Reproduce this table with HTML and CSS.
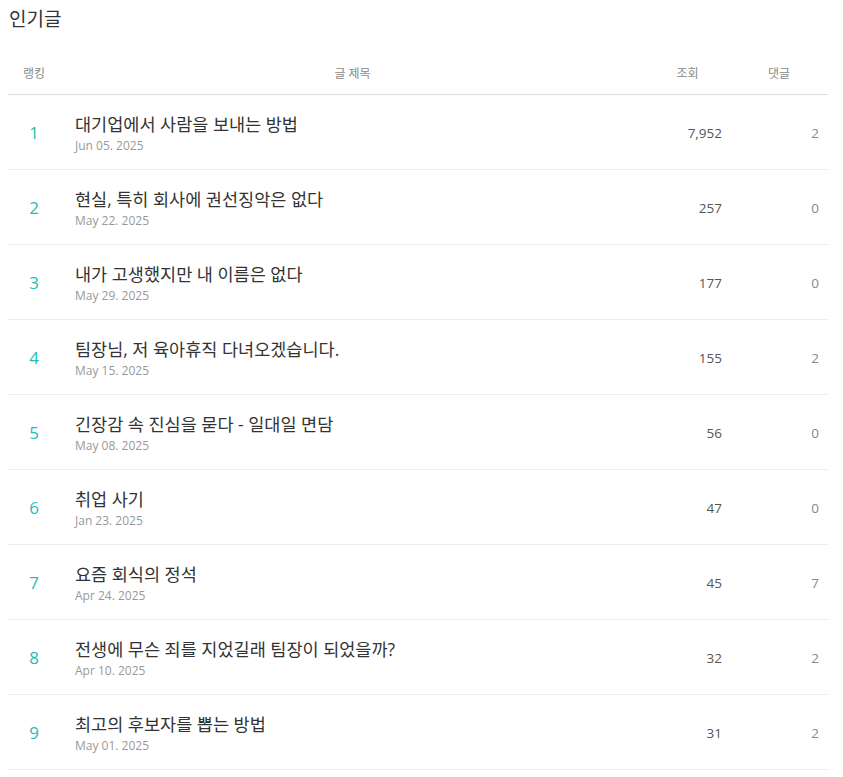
FILE: index.html
```html
<!DOCTYPE html>
<html lang="ko">
<head>
<meta charset="utf-8">
<title>인기글</title>
<link rel="stylesheet" href="styles.css">
</head>
<body>
<div class="page">
  <h1 class="page-title">인기글</h1>
  <table class="rank-table">
    <colgroup>
      <col class="c-rank"><col class="c-title"><col class="c-views"><col class="c-comments">
    </colgroup>
    <thead>
      <tr><th>랭킹</th><th>글 제목</th><th>조회</th><th>댓글</th></tr>
    </thead>
    <tbody>
      <tr><td class="rank">1</td><td class="post"><div class="post-title">대기업에서 사람을 보내는 방법</div><div class="post-date">Jun 05. 2025</div></td><td class="views">7,952</td><td class="comments">2</td></tr>
      <tr><td class="rank">2</td><td class="post"><div class="post-title">현실, 특히 회사에 권선징악은 없다</div><div class="post-date">May 22. 2025</div></td><td class="views">257</td><td class="comments">0</td></tr>
      <tr><td class="rank">3</td><td class="post"><div class="post-title">내가 고생했지만 내 이름은 없다</div><div class="post-date">May 29. 2025</div></td><td class="views">177</td><td class="comments">0</td></tr>
      <tr><td class="rank">4</td><td class="post"><div class="post-title">팀장님, 저 육아휴직 다녀오겠습니다.</div><div class="post-date">May 15. 2025</div></td><td class="views">155</td><td class="comments">2</td></tr>
      <tr><td class="rank">5</td><td class="post"><div class="post-title">긴장감 속 진심을 묻다 - 일대일 면담</div><div class="post-date">May 08. 2025</div></td><td class="views">56</td><td class="comments">0</td></tr>
      <tr><td class="rank">6</td><td class="post"><div class="post-title">취업 사기</div><div class="post-date">Jan 23. 2025</div></td><td class="views">47</td><td class="comments">0</td></tr>
      <tr><td class="rank">7</td><td class="post"><div class="post-title">요즘 회식의 정석</div><div class="post-date">Apr 24. 2025</div></td><td class="views">45</td><td class="comments">7</td></tr>
      <tr><td class="rank">8</td><td class="post"><div class="post-title">전생에 무슨 죄를 지었길래 팀장이 되었을까?</div><div class="post-date">Apr 10. 2025</div></td><td class="views">32</td><td class="comments">2</td></tr>
      <tr><td class="rank">9</td><td class="post"><div class="post-title">최고의 후보자를 뽑는 방법</div><div class="post-date">May 01. 2025</div></td><td class="views">31</td><td class="comments">2</td></tr>
    </tbody>
  </table>
</div>
</body>
</html>
```

FILE: styles.css
```css
html, body {
  margin: 0;
  padding: 0;
  background: #fff;
}
body {
  font-family: "Open Sans", "Noto Sans CJK KR", sans-serif;
  color: #333;
}
.page {
  padding: 7px 15px 0 8px;
}
.page-title {
  margin: 0 0 20px 1px;
  font-size: 19px;
  line-height: 24px;
  font-weight: 400;
  color: #333;
}
.rank-table {
  width: 820px;
  border-collapse: collapse;
  table-layout: fixed;
}
.c-rank { width: 52px; }
.c-title { width: 585px; }
.c-views { width: 85px; }
.c-comments { width: 98px; }
.rank-table th {
  height: 43px;
  padding: 0;
  font-size: 12px;
  font-weight: 400;
  color: #888;
  text-align: center;
  border-bottom: 1px solid #dcdcdc;
  vertical-align: middle;
}
.rank-table tbody tr {
  height: 75px;
}
.rank-table td {
  height: 72px;
  padding: 2px 0 0 0;
  border-bottom: 1px solid #ececec;
  vertical-align: middle;
  overflow: hidden;
}
.rank {
  text-align: center;
  font-size: 17px;
  line-height: 22px;
  color: #27bcae;
}
.rank-table td.post {
  padding: 3px 0 0 15px;
  height: 71px;
}
.post-title {
  font-size: 17.5px;
  line-height: 22px;
  color: #333;
  white-space: nowrap;
}
.post-date {
  font-size: 12px;
  line-height: 18px;
  color: #999;
  margin-top: 2px;
}
.rank-table td.views {
  text-align: right;
  padding-right: 8px;
  font-size: 13.5px;
  line-height: 20px;
  color: #555;
}
.rank-table td.comments {
  text-align: right;
  padding-right: 9px;
  font-size: 13.5px;
  line-height: 20px;
  color: #888;
}
```
